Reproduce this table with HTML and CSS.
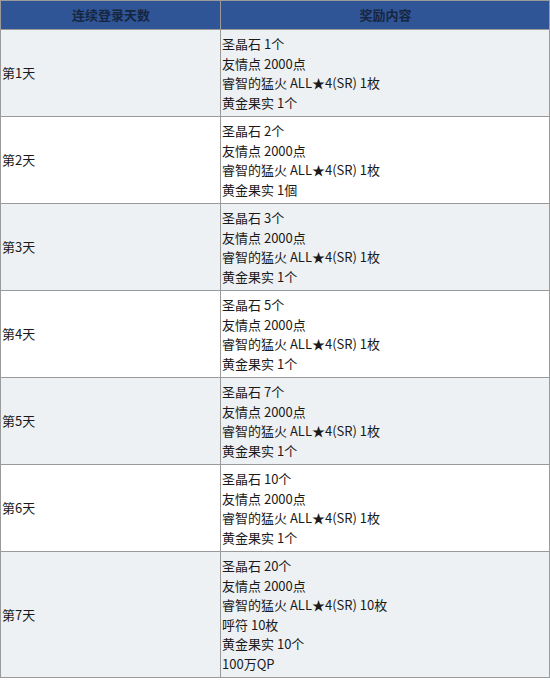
FILE: index.html
```html
<!DOCTYPE html>
<html lang="zh-CN">
<head>
<meta charset="utf-8">
<link rel="stylesheet" href="styles.css">
</head>
<body>
<table class="rewards">
  <thead>
    <tr><th class="col-day">连续登录天数</th><th class="col-reward">奖励内容</th></tr>
  </thead>
  <tbody>
    <tr class="odd"><td class="day">第1天</td><td class="items">圣晶石 1个<br>友情点 2000点<br>睿智的猛火 ALL★4(SR) 1枚<br>黄金果实 1个</td></tr>
    <tr><td class="day">第2天</td><td class="items">圣晶石 2个<br>友情点 2000点<br>睿智的猛火 ALL★4(SR) 1枚<br>黄金果实 1個</td></tr>
    <tr class="odd"><td class="day">第3天</td><td class="items">圣晶石 3个<br>友情点 2000点<br>睿智的猛火 ALL★4(SR) 1枚<br>黄金果实 1个</td></tr>
    <tr><td class="day">第4天</td><td class="items">圣晶石 5个<br>友情点 2000点<br>睿智的猛火 ALL★4(SR) 1枚<br>黄金果实 1个</td></tr>
    <tr class="odd"><td class="day">第5天</td><td class="items">圣晶石 7个<br>友情点 2000点<br>睿智的猛火 ALL★4(SR) 1枚<br>黄金果实 1个</td></tr>
    <tr><td class="day">第6天</td><td class="items">圣晶石 10个<br>友情点 2000点<br>睿智的猛火 ALL★4(SR) 1枚<br>黄金果实 1个</td></tr>
    <tr class="odd"><td class="day">第7天</td><td class="items">圣晶石 20个<br>友情点 2000点<br>睿智的猛火 ALL★4(SR) 10枚<br>呼符 10枚<br>黄金果实 10个<br>100万QP</td></tr>
  </tbody>
</table>
</body>
</html>
```
FILE: styles.css
```css
html, body {
  margin: 0;
  padding: 0;
  background: #ffffff;
}
body {
  font-family: "Noto Sans CJK SC", "Noto Sans", sans-serif;
  font-size: 13px;
  color: #1a1a1a;
}
.rewards {
  width: 550px;
  border-collapse: collapse;
  table-layout: fixed;
}
.rewards th, .rewards td {
  border: 1px solid #9a9a9a;
  padding: 0 0 0 1px;
  line-height: 19.5px;
}
.rewards th {
  background: #2f5597;
  color: #172640;
  font-weight: 700;
  height: 28px;
  text-align: center;
}
.col-day { width: 218px; }
.rewards td {
  vertical-align: middle;
  text-align: left;
  padding-top: 4px;
  padding-bottom: 4px;
}
.rewards tr.odd td {
  background: #edf1f4;
}
```
